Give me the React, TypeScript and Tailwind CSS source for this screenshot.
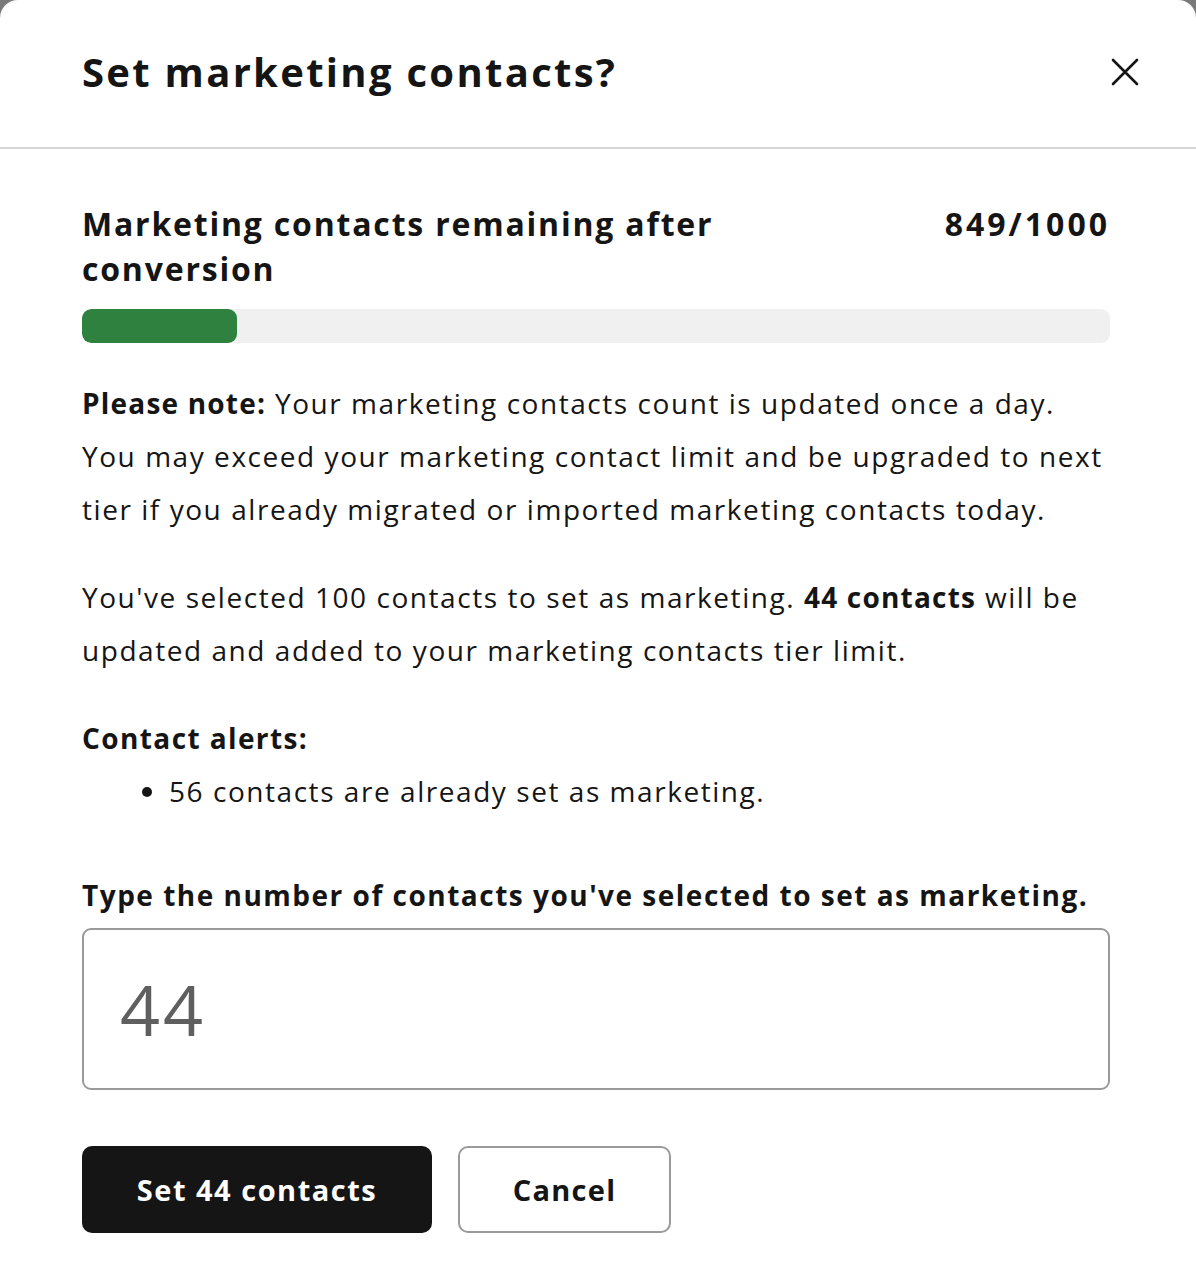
import React, { useState } from 'react';

const font = { fontFamily: '"Open Sans", "Noto Sans", sans-serif' };

export default function App() {
  const [value, setValue] = useState('44');
  const remaining = 849;
  const limit = 1000;
  const used = ((limit - remaining) / limit) * 100;

  return (
    <div className="min-h-[1280px] w-[1196px] bg-[#7a7a7a]" style={font}>
      <div className="min-h-[1280px] rounded-t-[18px] bg-white text-[#151515]">
        <div className="flex h-[149px] items-center justify-between border-b-2 border-[#d6d6d6] pb-[3px] pl-[82px] pr-[51px]">
          <h2 className="text-[40px] font-bold leading-none tracking-[2.3px]">Set marketing contacts?</h2>
          <button className="flex h-[40px] w-[40px] items-center justify-center" aria-label="Close">
            <svg width="28" height="28" viewBox="0 0 28 28" fill="none" stroke="#151515" strokeWidth="2.6" strokeLinecap="round">
              <path d="M2 2 L26 26 M26 2 L2 26" />
            </svg>
          </button>
        </div>

        <div className="pl-[82px] pr-[86px] pt-[52px]">
          <div className="flex items-start justify-between">
            <h3 className="w-[680px] text-[32px] font-bold leading-[45px] tracking-[1.8px]">
              Marketing contacts remaining after conversion
            </h3>
            <span className="text-[32px] font-bold leading-[45px] tracking-[3px]">{remaining}/{limit}</span>
          </div>

          <div className="mt-[18px] h-[34px] w-full overflow-hidden rounded-[9px] bg-[#f0f0f0]">
            <div className="h-full rounded-[9px] bg-[#2f8140]" style={{ width: `${used}%` }} />
          </div>

          <p className="mt-[34px] text-[28px] leading-[53px] tracking-[1.55px]">
            <strong className="font-bold tracking-[1.2px]">Please note:</strong> Your marketing contacts count is updated once a day.
            You may exceed your marketing contact limit and be upgraded to next tier if you already migrated or
            imported marketing contacts today.
          </p>

          <p className="mt-[35px] text-[28px] leading-[53px] tracking-[1.55px]">
            You've selected 100 contacts to set as marketing. <strong className="font-bold tracking-[1.2px]">44 contacts</strong> will
            be updated and added to your marketing contacts tier limit.
          </p>

          <div className="mt-[35px]">
            <h4 className="text-[28px] font-bold leading-[53px] tracking-[1.4px]">Contact alerts:</h4>
            <ul className="list-disc pl-[87px] text-[28px] leading-[53px] tracking-[1.55px]">
              <li>56 contacts are already set as marketing.</li>
            </ul>
          </div>

          <label className="mt-[51px] block text-[28px] font-bold leading-[53px] tracking-[1.5px]" htmlFor="count">
            Type the number of contacts you've selected to set as marketing.
          </label>
          <input
            id="count"
            value={value}
            onChange={(e) => setValue(e.target.value)}
            className="mt-[6px] h-[162px] w-full rounded-[9px] border-2 border-[#9a9a9a] px-[36px] text-[70px] tracking-[3px] text-[#5f5f5f] outline-none"
          />

          <div className="mt-[56px] flex gap-[26px]">
            <button className="h-[87px] w-[350px] rounded-[10px] bg-[#151515] text-[29px] font-bold tracking-[1.5px] text-white">
              Set 44 contacts
            </button>
            <button className="h-[87px] w-[213px] rounded-[10px] border-2 border-[#9a9a9a] bg-white text-[29px] font-bold tracking-[1.3px] text-[#151515]">
              Cancel
            </button>
          </div>
        </div>
      </div>
    </div>
  );
}
